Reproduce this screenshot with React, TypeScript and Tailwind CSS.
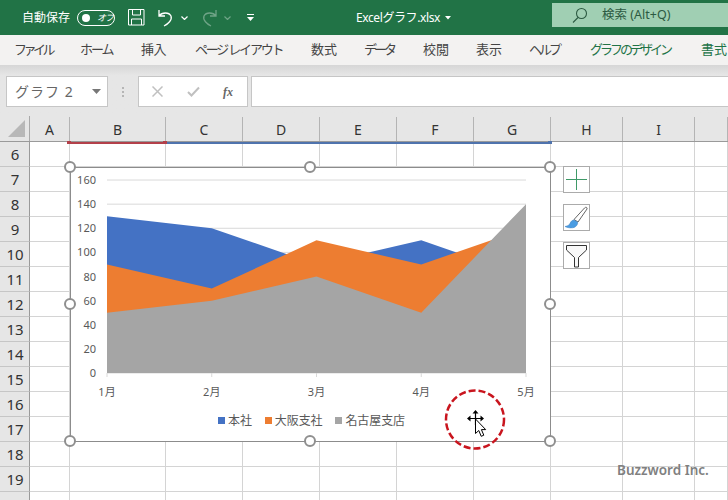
const tabs = [
  { label: "ファイル", cls: "w-[38px] tracking-[-3.5px] text-[#444]", mr: "mr-[28px]" },
  { label: "ホーム", cls: "w-[33px] tracking-[-2px] text-[#444]", mr: "mr-[28px]" },
  { label: "挿入", cls: "w-[25px] tracking-[-0.5px] text-[#444]", mr: "mr-[29px]" },
  { label: "ページ レイアウト", cls: "w-[87px] tracking-[-2.200px] text-[#444]", mr: "mr-[29px]" },
  { label: "数式", cls: "w-[26px] text-[#444]", mr: "mr-[27px]" },
  { label: "データ", cls: "w-[31px] tracking-[-3px] text-[#444]", mr: "mr-[28px]" },
  { label: "校閲", cls: "w-[26px] text-[#444]", mr: "mr-[27px]" },
  { label: "表示", cls: "w-[26px] text-[#444]", mr: "mr-[27px]" },
  { label: "ヘルプ", cls: "w-[32px] tracking-[-3px] text-[#444]", mr: "mr-[29px]" },
  { label: "グラフのデザイン", cls: "w-[81px] tracking-[-3px] text-[#217346]", mr: "mr-[30px]" },
  { label: "書式", cls: "w-[26px] text-[#217346]", mr: "" },
];

const columns = [
  { label: "A", w: "w-[40px]" },
  { label: "B", w: "w-[96px]" },
  { label: "C", w: "w-[77px]" },
  { label: "D", w: "w-[77px]" },
  { label: "E", w: "w-[77px]" },
  { label: "F", w: "w-[77px]" },
  { label: "G", w: "w-[77px]" },
  { label: "H", w: "w-[72px]" },
  { label: "I", w: "w-[72px]" },
  { label: "", w: "w-[33px]" },
];

const rows = [6, 7, 8, 9, 10, 11, 12, 13, 14, 15, 16, 17, 18, 19, 20];

const xs = [107, 211.75, 316.5, 421.25, 526];
const yOf = (v: number) => 373 - v * 1.206;
const area = (vals: number[]) =>
  `107,373 ${vals.map((v, i) => `${xs[i]},${yOf(v)}`).join(" ")} 526,373`;

const legend = [
  { label: "本社", cls: "bg-[#4472c4]" },
  { label: "大阪支社", cls: "bg-[#ed7d31]" },
  { label: "名古屋支店", cls: "bg-[#a5a5a5]" },
];

function Handle({ cls }: { cls: string }) {
  return (
    <div
      className={`absolute size-[12px] rounded-full bg-white border-[2.5px] border-[#8f8f8f] ${cls}`}
    />
  );
}

function Chart() {
  return (
    <div className="absolute left-[69px] top-[51px] w-[481px] h-[275px] bg-white border-[1.5px] border-[#8c8c8c]">
      <svg width="480" height="235" viewBox="70 167 480 235" className="block -ml-[1.5px] -mt-[1.5px]">
        {[0, 20, 40, 60, 80, 100, 120, 140, 160].map((v) => (
          <g key={v}>
            <line x1="107" x2="526" y1={yOf(v)} y2={yOf(v)} stroke="#d9d9d9" strokeWidth="1" />
            <text x="96" y={yOf(v) + 4} textAnchor="end" fontSize="11" fill="#595959">
              {v}
            </text>
          </g>
        ))}
        <polygon points={area([130, 120, 90, 110, 80])} fill="#4472c4" />
        <polygon points={area([90, 70, 110, 90, 120])} fill="#ed7d31" />
        <polygon points={area([50, 60, 80, 50, 140])} fill="#a5a5a5" />
        {xs.map((x, i) => (
          <g key={x}>
            <line x1={x} x2={x} y1="373" y2="377" stroke="#d9d9d9" />
            <text x={x} y="396" textAnchor="middle" fontSize="11" fill="#595959">
              {i + 1}月
            </text>
          </g>
        ))}
      </svg>
      <div className="flex justify-center gap-[13px] mt-[10px] h-[18px] items-center text-[12px] text-[#595959] pl-[2px]">
        {legend.map((l) => (
          <div key={l.label} className="flex items-center gap-[3px]">
            <span className={`size-[7px] ${l.cls}`} />
            <span className="tracking-[-0.1px]">{l.label}</span>
          </div>
        ))}
      </div>
    </div>
  );
}

function ChartButtons() {
  return (
    <div className="absolute left-[562px] top-[50px] flex flex-col gap-[11px]">
      <button className="size-[27px] bg-white border border-[#ababab] flex items-center justify-center">
        <svg width="21" height="21" viewBox="0 0 21 21">
          <path d="M10.5 0v21M0 10.5h21" stroke="#3f9a68" strokeWidth="1" />
        </svg>
      </button>
      <button className="size-[27px] bg-white border border-[#ababab] flex items-center justify-center">
        <svg width="25" height="25" viewBox="0 0 25 25">
          <path d="M10 14.500 20.500 3c1.500-1.500 3-.500 2.500 1L14 17z" fill="#fff" stroke="#666" strokeWidth="1" />
          <path d="M10 15c-3 0-3.500 3-5 5-1 .8-3 1.300-4 1.500 2 1.500 8 2 10 .500 2.500-1.500 3-4 2.500-5z" fill="#4a9ce2" stroke="#3b7fc0" strokeWidth="0.5" />
        </svg>
      </button>
      <button className="size-[27px] bg-white border border-[#ababab] flex items-center justify-center">
        <svg width="23" height="24" viewBox="0 0 23 24">
          <path d="M1.500 1.500h20v4.500l-8 7.500v9.500h-4v-9.500l-8-7.500z" fill="#f8f8f8" stroke="#333" strokeWidth="1" />
        </svg>
      </button>
    </div>
  );
}

function Annotation() {
  return (
    <svg
      width="64"
      height="64"
      viewBox="443 388 64 64"
      className="absolute left-[442px] top-[272px]">
      <circle cx="475" cy="419.5" r="29" fill="none" stroke="#c9151e" strokeWidth="2.500" strokeDasharray="7 3" />
      <path
        d="M475.500 412v13M469 418.500h13"
        stroke="#000"
        strokeWidth="1.200"
        fill="none"
      />
      <path d="M472.500 413.500l3-3.500 3 3.500zM470.500 415.500l-3.500 3 3.500 3zM480.500 415.500l3.500 3-3.500 3z" fill="#000" />
      <path
        d="M475.500 419v14.500l3.300-3 2.400 5.800 2.600-1.100-2.400-5.600h4.300z"
        fill="#fff"
        stroke="#000"
        strokeWidth="1"
      />
    </svg>
  );
}

export default function App() {
  return (
    <div className="w-[728px] h-[500px] overflow-hidden flex flex-col bg-white font-['Noto_Sans','Noto_Sans_CJK_JP',sans-serif]">
      {/* title bar */}
      <div className="h-[35px] shrink-0 bg-[#217346] flex items-center text-white relative">
        <span className="ml-[22px] text-[12px] w-[49px] whitespace-nowrap">自動保存</span>
        <div className="ml-[6px] w-[38px] h-[16px] rounded-full border border-white flex items-center">
          <span className="ml-[4px] size-[8px] rounded-full bg-white" />
          <span className="ml-[7px] text-[9px] tracking-[-1px] italic">オフ</span>
        </div>
        <svg width="17" height="17" viewBox="0 0 17 17" className="ml-[13px]" fill="none" stroke="#fff" strokeWidth="1">
          <path d="M.5.500h15.500v15.500H.500zM4.500.500v5.500h8v-5.500M3.500 16v-6h10v6" />
        </svg>
        <svg width="17" height="18" viewBox="0 0 17 18" className="ml-[12px]" fill="none" stroke="#fff" strokeWidth="1.300">
          <path d="M2 1v6h6M2 7c3-4 10-4 12 0 1.500 4-3 8-7 10" />
        </svg>
        <svg width="7" height="4" viewBox="0 0 7 4" className="ml-[7px]" fill="none" stroke="#fff" strokeWidth="1.200">
          <path d="M.5.500 3.500 3.500 6.500.500" />
        </svg>
        <svg width="17" height="18" viewBox="0 0 17 18" className="ml-[13px] opacity-35" fill="none" stroke="#fff" strokeWidth="1.300">
          <path d="M15 1v6H9M15 7c-3-4-10-4-12 0-1.500 4 3 8 7 10" />
        </svg>
        <svg width="7" height="4" viewBox="0 0 7 4" className="ml-[6px] opacity-35" fill="none" stroke="#fff" strokeWidth="1.200">
          <path d="M.5.500 3.500 3.500 6.500.500" />
        </svg>
        <svg width="8" height="8" viewBox="0 0 8 8" className="ml-[16px]" fill="#fff">
          <path d="M0 0h7v1H0zM0 3h7L3.500 7z" />
        </svg>
        <span className="ml-[101px] w-[82px] text-[12px] whitespace-nowrap tracking-[-0.4px]">Excelグラフ.xlsx</span>
        <svg width="6" height="4" viewBox="0 0 6 4" className="ml-[7px]" fill="#fff">
          <path d="M0 0h6L3 3.500z" />
        </svg>
        <div className="ml-auto w-[176px] h-[24px] mb-[5px] bg-[#a0cfb3] flex items-center text-[#2c5a42]">
          <svg width="16" height="16" viewBox="0 0 16 16" className="ml-[20px]" fill="none" stroke="#2c5a42" strokeWidth="1.100">
            <circle cx="9.500" cy="6.500" r="5" />
            <path d="M6 10.500 1 15.500" />
          </svg>
          <span className="ml-[14px] text-[12.5px] whitespace-nowrap">検索 (Alt+Q)</span>
        </div>
      </div>

      {/* ribbon tabs */}
      <div className="h-[30px] shrink-0 bg-[#f3f2f1] flex items-center pl-[14px] text-[13px] whitespace-nowrap">
        {tabs.map((t) => (
          <span key={t.label} className={`shrink-0 ${t.cls} ${t.mr}`}>
            {t.label}
          </span>
        ))}
      </div>

      {/* formula bar */}
      <div className="h-[51px] shrink-0 bg-linear-to-b from-[#d6d6d6] via-[#e6e6e6] via-[20%] to-[#e6e6e6] flex items-start pt-[11px] pl-[6px]">
        <div className="w-[102px] h-[31px] bg-white border border-[#c6c6c6] flex items-center pl-[8px] text-[14px] text-[#666] tracking-[1px]">
          <span>グラフ 2</span>
          <svg width="9" height="5" viewBox="0 0 9 5" className="ml-auto mr-[6px]" fill="#777">
            <path d="M0 0h9L4.500 5z" />
          </svg>
        </div>
        <div className="w-[30px] h-[31px] flex flex-col items-center justify-center gap-[2px]">
          <span className="size-[2px] bg-[#b5b5b5]" />
          <span className="size-[2px] bg-[#b5b5b5]" />
          <span className="size-[2px] bg-[#b5b5b5]" />
        </div>
        <div className="w-[110px] h-[31px] bg-white border border-[#c6c6c6] flex items-center">
          <svg width="11" height="11" viewBox="0 0 11 11" className="ml-[13px]" stroke="#c0c0c0" strokeWidth="1.500">
            <path d="M.5.500l10 10M10.500.500l-10 10" />
          </svg>
          <svg width="13" height="11" viewBox="0 0 13 11" className="ml-[24px]" fill="none" stroke="#c0c0c0" strokeWidth="2">
            <path d="M1 6l3.500 3.500L12 1.500" />
          </svg>
          <span className="ml-[23px] text-[12px] font-['Liberation_Serif',serif] italic font-bold text-[#666]">fx</span>
        </div>
        <div className="ml-[3px] flex-1 h-[31px] bg-white border border-[#c6c6c6] border-r-0" />
      </div>

      {/* sheet */}
      <div className="relative flex-1 border-l border-[#217346]">
        <div className="flex h-[26px] bg-[#e6e6e6] border-b border-[#9a9a9a] -ml-[1px]">
          <div className="w-[30px] shrink-0 border-r border-[#a9a9a9] flex items-end justify-end pr-[4px] pb-[4px]">
            <svg width="17" height="17" viewBox="0 0 17 17" fill="#b8b8b8">
              <path d="M17 0v17H0z" />
            </svg>
          </div>
          {columns.map((c) => (
            <div
              key={c.label || "end"}
              className={`${c.w} shrink-0 border-r border-[#b4b4b4] mt-[1px] flex items-center justify-center text-[14px] text-[#333]`}>
              {c.label}
            </div>
          ))}
        </div>

        {rows.map((r) => (
          <div key={r} className="flex h-[25px] -ml-[1px]">
            <div className="w-[30px] shrink-0 pl-[1px] bg-[#e6e6e6] border-r border-b border-r-[#9a9a9a] border-b-[#c6c6c6] flex items-center justify-center text-[15px] text-[#333]">
              {r}
            </div>
            {columns.map((c) => (
              <div key={c.label || "end"} className={`${c.w} shrink-0 border-r border-b border-[#d4d4d4]`} />
            ))}
          </div>
        ))}

        {/* copied range marks along the header edge */}
        <div className="absolute left-[68px] top-[26px] w-[96px] h-[1.5px] bg-[#b3404a]" />
        <div className="absolute left-[66px] top-[25px] w-[4px] h-[3px] bg-[#b3404a]" />
        <div className="absolute left-[162px] top-[25px] w-[4px] h-[3px] bg-[#b3404a]" />
        <div className="absolute left-[166px] top-[26px] w-[383px] h-[1.5px] bg-[#4f73ad]" />
        <div className="absolute left-[547px] top-[25px] w-[4px] h-[3px] bg-[#4f73ad]" />

        <Chart />
        <Handle cls="left-[63px] top-[45px]" />
        <Handle cls="left-[303px] top-[45px]" />
        <Handle cls="left-[543px] top-[45px]" />
        <Handle cls="left-[63px] top-[182px]" />
        <Handle cls="left-[543px] top-[182px]" />
        <Handle cls="left-[63px] top-[319px]" />
        <Handle cls="left-[303px] top-[319px]" />
        <Handle cls="left-[543px] top-[319px]" />
        <ChartButtons />
        <Annotation />

        <span className="absolute left-[616px] top-[344px] text-[13.5px] font-semibold text-[#808080] whitespace-nowrap">
          Buzzword Inc.
        </span>
      </div>
    </div>
  );
}
